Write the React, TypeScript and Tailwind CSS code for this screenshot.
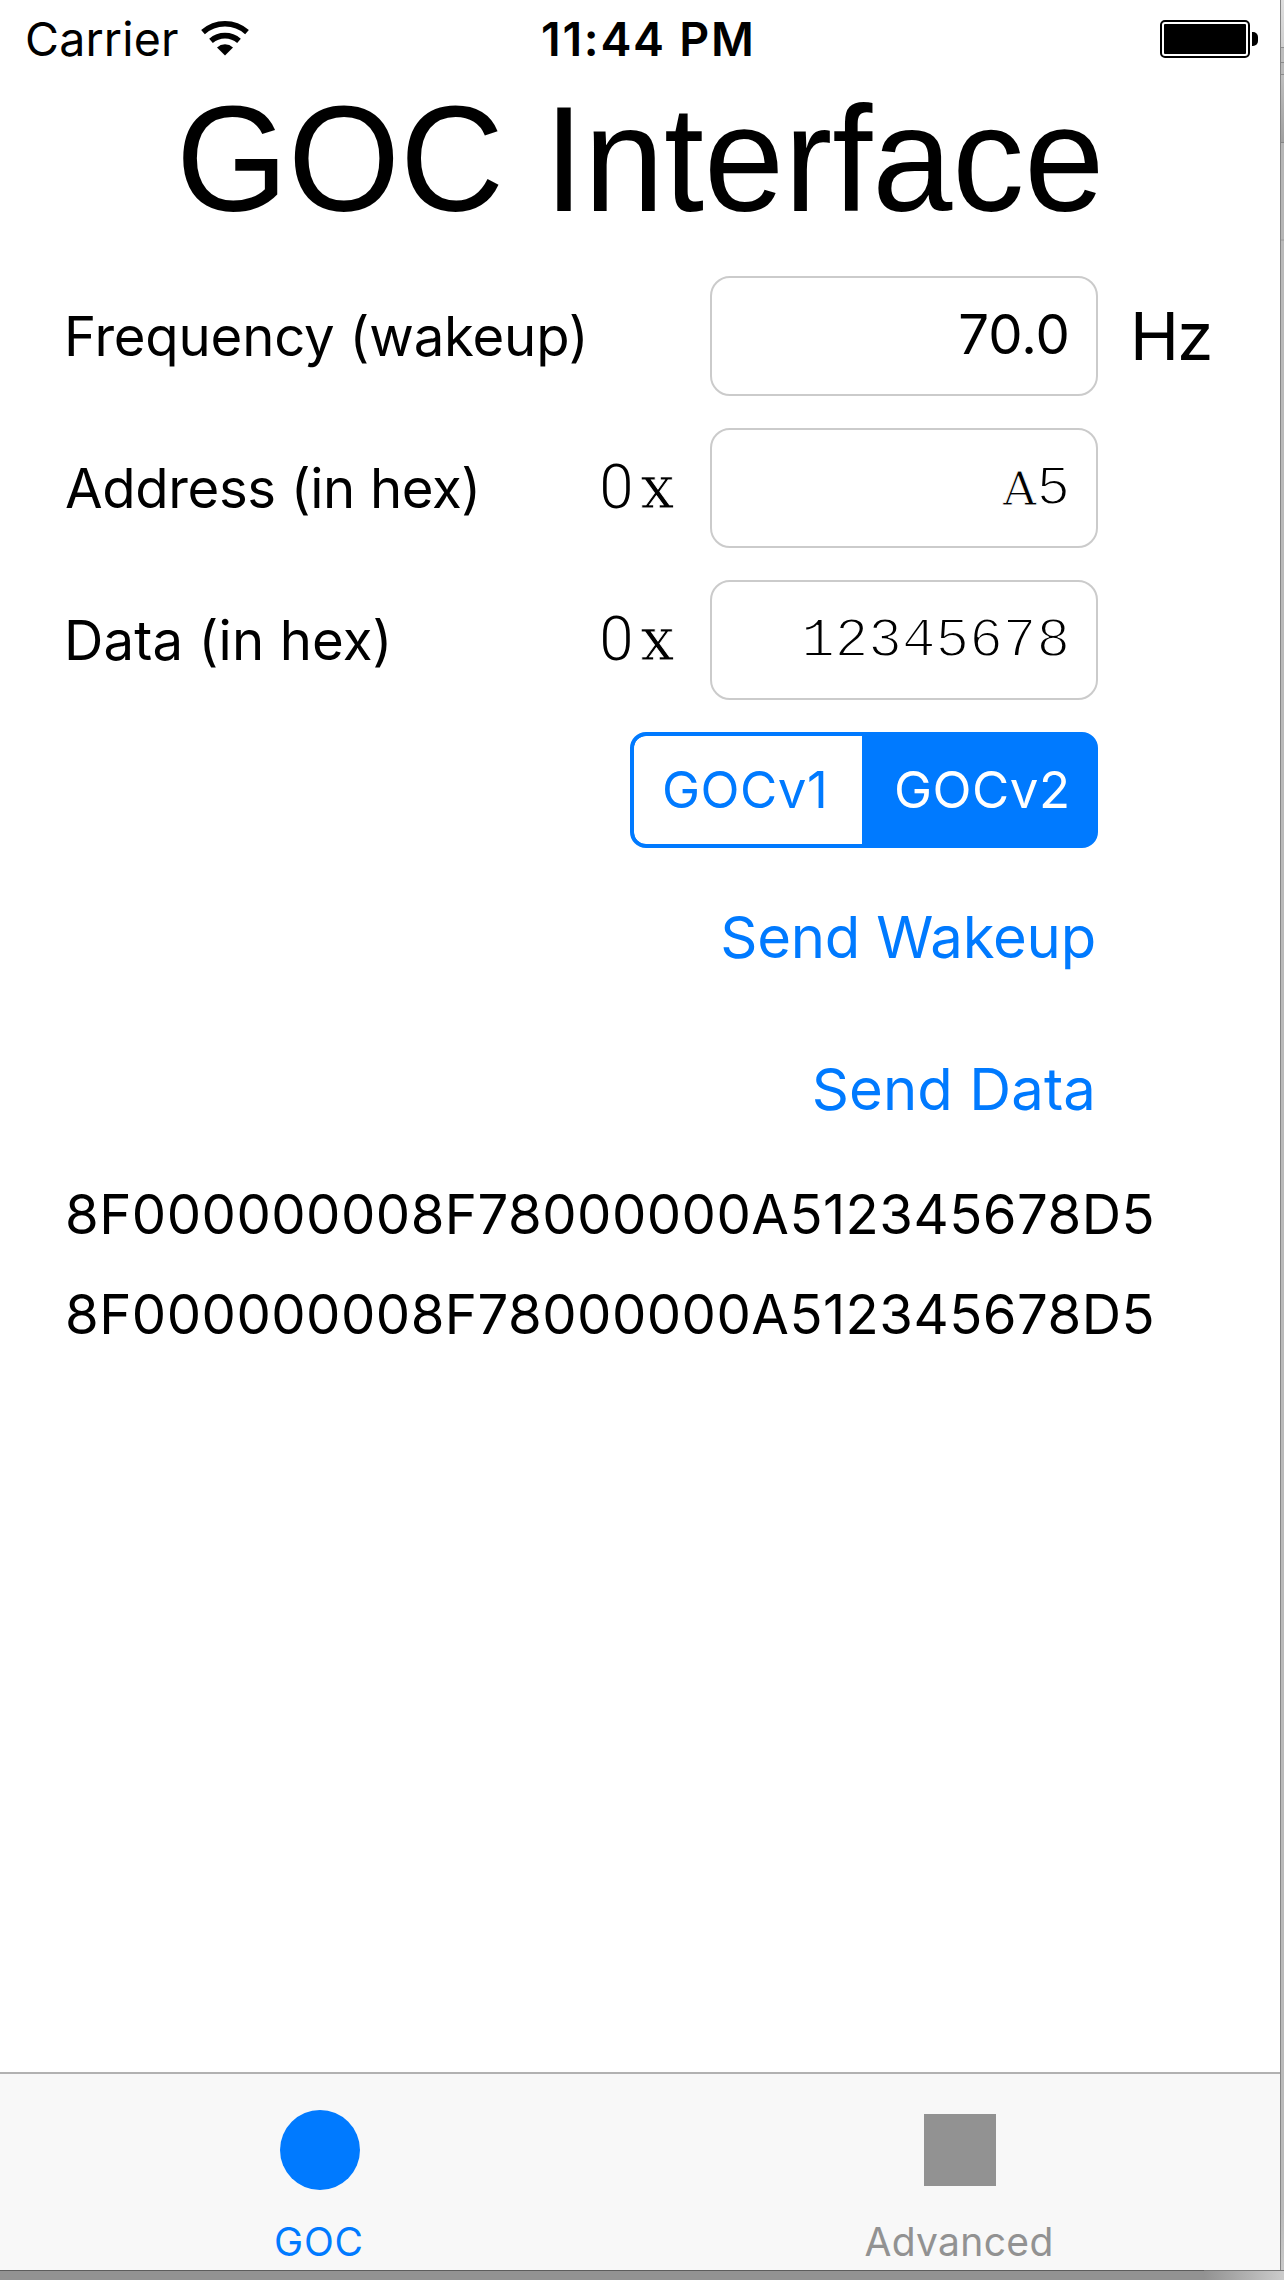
import type { ReactNode } from "react";

const thin = "[-webkit-text-stroke:1.8px_white]";

function WifiIcon() {
  return (
    <svg width="48" height="36" viewBox="0 0 48 36" fill="none" className="block">
      <path d="M2 12.2 A33 33 0 0 1 46 12.2" stroke="#000" strokeWidth="5.6" />
      <path d="M10 20.8 A21.5 21.5 0 0 1 38 20.8" stroke="#000" strokeWidth="5.6" />
      <path d="M24 35.5 L16 27.4 A12 12 0 0 1 32 27.4 Z" fill="#000" />
    </svg>
  );
}

function Battery() {
  return (
    <div className="flex items-center gap-0.5">
      <div className="h-[38px] w-[90px] rounded-[5px] border-2 border-black p-0.5">
        <div className="h-full w-full rounded-[1px] bg-black" />
      </div>
      <div className="h-3.5 w-1.5 rounded-r-[5px] bg-black" />
    </div>
  );
}

function StatusBar() {
  return (
    <div className="flex h-[78px] items-start pl-[25px] text-[46.5px] leading-[78px] whitespace-nowrap">
      <div className="w-[176px] shrink-0 tracking-[0.18px]">Carrier</div>
      <div className="mt-5 shrink-0">
        <WifiIcon />
      </div>
      <div className="ml-[292px] w-[216px] shrink-0 font-semibold tracking-[1.75px]">11:44 PM</div>
      <div className="mt-5 ml-[403px] shrink-0">
        <Battery />
      </div>
    </div>
  );
}

function HexPrefix() {
  return (
    <div className="flex h-[118px] w-[82px]">
      <span className="w-[41px] text-center font-['Roboto'] text-[61px] leading-[118px] font-light">0</span>
      <span className="w-[41px] text-center font-['DejaVu_Serif'] text-[60px] leading-[119px] [-webkit-text-stroke:0.8px_white]">x</span>
    </div>
  );
}

type RowProps = { label: ReactNode; prefix?: boolean; unit?: string; children: ReactNode };

function Row({ label, prefix, unit, children }: RowProps) {
  return (
    <div className="flex h-[120px] text-[54.5px] leading-[120px] whitespace-nowrap">
      <div className="w-[532px] shrink-0">{label}</div>
      <div className="w-[114px] shrink-0">{prefix && <HexPrefix />}</div>
      <div className="h-[120px] w-[388px] shrink-0 rounded-[20px] border-2 border-[#cbcbcb] pr-[26px] text-right">{children}</div>
      {unit && <div className="ml-[32px] text-[66px] leading-[121px] tracking-[-2px]">{unit}</div>}
    </div>
  );
}

function EdgeColumn() {
  return (
    <div className="flex w-1 flex-col border-l border-[#858585] bg-[#bcbcbc]">
      <div className="h-[47px] bg-linear-to-b from-[#dedede] to-[#cfcfcf]" />
      <div className="h-px bg-[#909090]" />
      <div className="h-3.5 bg-[#bdbdbd]" />
      <div className="h-px bg-[#8b8b8b]" />
      <div className="h-[11px] bg-[#b9b9b9]" />
      <div className="h-px bg-[#8b8b8b]" />
      <div className="h-[67px] bg-linear-to-b from-[#bebebe] to-[#a0a0a0]" />
      <div className="h-px bg-[#858585]" />
      <div className="h-24 bg-[#b6b6b6]" />
      <div className="h-0.5 bg-[#a9a9a9]" />
      <div className="h-[1970px] bg-[#bababa]" />
      <div className="flex-1 bg-linear-to-b from-[#bababa] to-[#c8c8c8]" />
    </div>
  );
}

export default function App() {
  return (
    <div className="flex h-[2280px] w-[1284px] flex-col overflow-hidden bg-[#939393] font-['Inter',sans-serif] text-black">
      <div className="flex h-[2270px]">
        <div className="flex w-[1280px] flex-col bg-white">
          <StatusBar />
          <h1 className="mt-px ml-[175.5px] w-[970px] origin-left scale-x-[0.96] font-['Liberation_Sans',sans-serif] text-[150px] leading-[160px] whitespace-nowrap">
            GOC Interface
          </h1>

          <div className="mt-[37px] flex flex-col gap-8 pl-16">
            <Row label={<span className="tracking-[-0.2px]">Frequency (wakeup)</span>} unit="Hz">
              <div className="leading-[112px]">70.0</div>
            </Row>
            <Row label={<span className="ml-px tracking-[-0.36px]">Address (in hex)</span>} prefix>
              <div className="flex justify-end font-['Liberation_Mono',monospace] text-[56px] leading-[118px]">
                <span className="w-[33.6px] text-center font-['DejaVu_Serif'] text-[46px] leading-[119px] [-webkit-text-stroke:0.9px_white]">
                  A
                </span>
                <span className={thin}>5</span>
              </div>
            </Row>
            <Row label={<span className="tracking-[0.12px]">Data (in hex)</span>} prefix>
              <div className={`font-['Liberation_Mono',monospace] text-[56px] leading-[118px] ${thin}`}>12345678</div>
            </Row>
          </div>

          <div className="mt-8 ml-[630px] flex h-[116px] w-[468px] overflow-hidden rounded-[16px] border-4 border-[#007aff] bg-[#007aff] text-[51px] leading-[107px] tracking-[0.5px] whitespace-nowrap">
            <div className="w-[228px] shrink-0 rounded-l-[12px] bg-white pl-7 text-[#007aff]">GOCv1</div>
            <div className="pl-8 text-white">GOCv2</div>
          </div>

          <div className="mt-[29px] flex flex-col items-end gap-8 pr-[184px] text-[58px] leading-[120px] text-[#007aff]">
            <div className="tracking-[-0.2px]">Send Wakeup</div>
            <div className="tracking-[0.1px]">Send Data</div>
          </div>

          <div className="mt-[15px] pl-[65px] text-[54.5px] leading-[100px] tracking-[0.47px] whitespace-nowrap">
            <div>8F000000008F78000000A512345678D5</div>
            <div>8F000000008F78000000A512345678D5</div>
          </div>

          <div className="mt-auto flex h-[198px] border-t-2 border-[#b2b2b2] bg-[#f8f8f8] text-[39px] leading-[47px]">
            <div className="flex w-1/2 flex-col items-center pt-9 text-[#007aff]">
              <div className="size-20 rounded-full bg-[#007aff]" />
              <div className="mt-7 mr-0.5 tracking-[0.8px]">GOC</div>
            </div>
            <div className="flex w-1/2 flex-col items-center pt-10 text-[#929292]">
              <div className="size-[72px] bg-[#929292]" />
              <div className="mt-8 mr-0.5 tracking-[0.33px]">Advanced</div>
            </div>
          </div>
        </div>
        <EdgeColumn />
      </div>
      <div className="flex h-2.5">
        <div className="w-[1204px] border-t border-[#5c5c5c] bg-[#929292]" />
        <div className="flex-1 border-t border-[#777777] bg-linear-to-r from-[#929292] to-[#cccccc]" />
      </div>
    </div>
  );
}
